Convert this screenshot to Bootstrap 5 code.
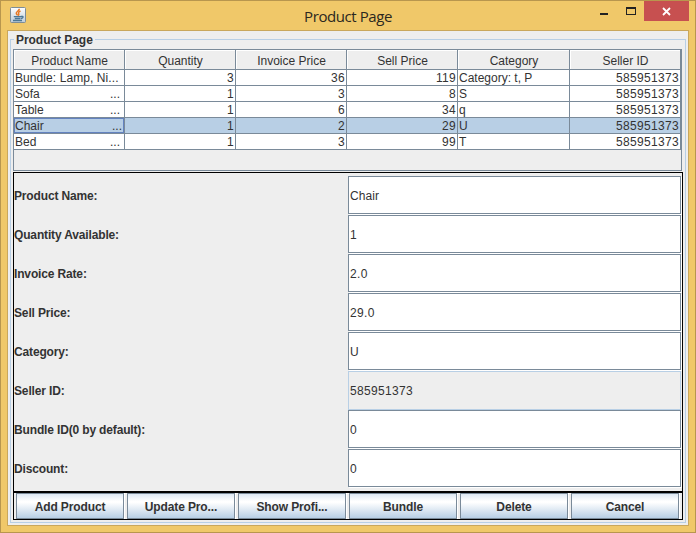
<!DOCTYPE html>
<html lang="en">
<head>
<meta charset="utf-8">
<title>Product Page</title>
<link href="https://cdn.jsdelivr.net/npm/bootstrap@5.3.0/dist/css/bootstrap.min.css" rel="stylesheet">
<style>
body{width:696px;height:533px;overflow:hidden;background:#f0c869;font:12px/14px "Liberation Sans",Arial,sans-serif;color:#333;letter-spacing:0}
.window{height:533px;border:1px solid #b8964e;padding:0 6px 6px}
.titlebar{height:29px}
.titlebar h1{font:15px/28px "Open Sans","Segoe UI",sans-serif;color:#2b2720;letter-spacing:-.42px;padding-right:19px;padding-top:1px}
.java-icon{width:16px;height:16px;margin:6px 0 0 3px}
.win-controls{right:0;top:0;height:20px}
.client{height:496px;border:1px solid #c9a75c;background:#eee;padding:0 2px 2px}
.titled{height:484px;border:1px solid #b8cfe5;margin-top:8px;padding:9px 2px 2px}
.titled>.caption-text{top:-7px;left:3px;background:#eee;padding:0 2px 0 2px;line-height:14px;letter-spacing:-.05px}
.scroller{width:669px;height:122px;border:1px solid #7a8a99}
.grid-table{width:667px;table-layout:fixed;border-collapse:separate;border-spacing:0}
.grid-table th{height:20px;padding:2px 0 0 1px;font-weight:400;text-align:center;border-right:1px solid #7a8a99;border-bottom:1px solid #7a8a99;box-shadow:inset 1px 1px #fff;line-height:16px}
.grid-table td{height:16px;line-height:14px;padding:1px 1px 0;background:#fff;border-right:1px solid #7a8a99;border-bottom:1px solid #7a8a99;white-space:nowrap}
.grid-table .picked td{background:#b8cfe5}
.grid-table .picked td:first-child{box-shadow:inset 0 0 0 1px #6382bf}
.grid-table .num,.fld.digits{letter-spacing:.33px}
.grid-table .spread{letter-spacing:.08px}
.name-cell{padding-right:3px}
.picked .name-cell{padding-right:1px}
.num{text-align:right}
.form-box{width:670px;height:320px;margin-top:1px;border:1px solid #000;padding:3px 0 0}
.field-row{height:39px}
.field-row label{width:334px;font-weight:700;letter-spacing:-.15px}
.fld{width:333px;height:38px;border:1px solid #7a8a99;background:#fff;padding:2px 1px 0;margin-bottom:1px;border-radius:0;outline:0;color:#333;font:inherit;letter-spacing:.1px;box-shadow:1px 1px #fff}
.fld:disabled{background:#eee;border-color:#b8cfe5;box-shadow:none;height:39px;padding-top:0;margin:0}
.button-box{width:670px;height:28px;border:1px solid #000;padding:0 2px;gap:3px}
.mbtn{width:108px;height:26px;border:1px solid #7a8a99;border-radius:0;padding:1px 0 0;font:700 12px/14px "Liberation Sans",Arial,sans-serif;letter-spacing:-.12px;color:#333;background:linear-gradient(#dde8f3 0,#fff 30%,#fff 35%,#b8cfe5 100%);box-shadow:1px 0 #fff}
</style>
<script src="https://cdn.jsdelivr.net/npm/bootstrap@5.3.0/dist/js/bootstrap.bundle.min.js"></script>
</head>
<body>
<main class="window position-relative">
  <header class="titlebar d-flex">
    <svg class="java-icon flex-shrink-0" viewBox="0 0 16 16">
      <defs><linearGradient id="jg" x2="0" y2="1"><stop stop-color="#fff"/><stop offset="1" stop-color="#bccbd8"/></linearGradient></defs>
      <rect x=".5" y=".5" width="15" height="15" rx="1" fill="url(#jg)" stroke="#7d8d98"/>
      <path d="M9.300 1.800C9.500 4 5.800 4.500 6.300 6.300 6.500 7.300 7.500 7.800 7.500 8.500M10.500 4C8.300 5 8.100 6 8.800 7 9.100 7.700 8.600 8.200 8.100 8.600" fill="none" stroke="#e87822" stroke-width="1.500"/>
      <path d="M3.800 9.700H11M4.800 11.500H10.500M3 13.500H12M11 9.500C14 8.700 13.500 11.300 11 11.500" fill="none" stroke="#4c7896" stroke-width="1.300"/>
    </svg>
    <h1 class="flex-grow-1 text-center m-0">Product Page</h1>
    <svg class="win-controls position-absolute" width="102" height="20" viewBox="593 1 102 20">
      <path d="M600 13h8v2h-8z" fill="#222"/>
      <path d="M626 7h10v8h-10zM627 9v5h8V9z" fill="#222" fill-rule="evenodd"/>
      <path d="M644 1h45v20h-45z" fill="#c75050"/>
      <path d="M663 8l7 7M670 8l-7 7" stroke="#fff" stroke-width="1.800"/>
    </svg>
  </header>
  <section class="client">
    <div class="titled position-relative">
      <div class="caption-text position-absolute fw-bold">Product Page</div>
      <div class="scroller">
        <table class="grid-table">
          <colgroup><col style="width:111px"><col style="width:111px"><col style="width:111px"><col style="width:111px"><col style="width:112px"><col style="width:111px"></colgroup>
          <thead><tr><th>Product Name</th><th>Quantity</th><th>Invoice Price</th><th>Sell Price</th><th>Category</th><th>Seller ID</th></tr></thead>
          <tbody>
            <tr><td class="spread">Bundle: Lamp, Ni...</td><td class="num">3</td><td class="num">36</td><td class="num">119</td><td>Category: t, P</td><td class="num">585951373</td></tr>
            <tr><td><div class="name-cell d-flex justify-content-between"><span>Sofa</span><span>...</span></div></td><td class="num">1</td><td class="num">3</td><td class="num">8</td><td>S</td><td class="num">585951373</td></tr>
            <tr><td><div class="name-cell d-flex justify-content-between"><span>Table</span><span>...</span></div></td><td class="num">1</td><td class="num">6</td><td class="num">34</td><td>q</td><td class="num">585951373</td></tr>
            <tr class="picked"><td><div class="name-cell d-flex justify-content-between"><span>Chair</span><span>...</span></div></td><td class="num">1</td><td class="num">2</td><td class="num">29</td><td>U</td><td class="num">585951373</td></tr>
            <tr><td><div class="name-cell d-flex justify-content-between"><span>Bed</span><span>...</span></div></td><td class="num">1</td><td class="num">3</td><td class="num">99</td><td>T</td><td class="num">585951373</td></tr>
          </tbody>
        </table>
      </div>
      <form class="form-box">
        <div class="field-row d-flex align-items-center"><label for="f1">Product Name:</label><input class="fld" id="f1" value="Chair"></div>
        <div class="field-row d-flex align-items-center"><label for="f2">Quantity Available:</label><input class="fld digits" id="f2" value="1"></div>
        <div class="field-row d-flex align-items-center"><label for="f3">Invoice Rate:</label><input class="fld digits" id="f3" value="2.0"></div>
        <div class="field-row d-flex align-items-center"><label for="f4">Sell Price:</label><input class="fld digits" id="f4" value="29.0"></div>
        <div class="field-row d-flex align-items-center"><label for="f5">Category:</label><input class="fld" id="f5" value="U"></div>
        <div class="field-row d-flex align-items-center"><label for="f6">Seller ID:</label><input class="fld digits" id="f6" value="585951373" disabled></div>
        <div class="field-row d-flex align-items-center"><label for="f7">Bundle ID(0 by default):</label><input class="fld digits" id="f7" value="0"></div>
        <div class="field-row d-flex align-items-center"><label for="f8">Discount:</label><input class="fld digits" id="f8" value="0"></div>
      </form>
      <div class="button-box d-flex">
        <button class="btn mbtn">Add Product</button><button class="btn mbtn">Update Pro...</button><button class="btn mbtn">Show Profi...</button><button class="btn mbtn">Bundle</button><button class="btn mbtn">Delete</button><button class="btn mbtn">Cancel</button>
      </div>
    </div>
  </section>
</main>
</body>
</html>
